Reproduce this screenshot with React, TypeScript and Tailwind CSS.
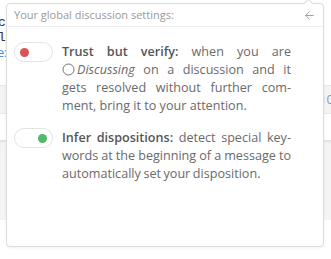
import React from 'react';
import { ArrowLeft } from 'lucide-react';

const font = { fontFamily: '"Open Sans", "Noto Sans", sans-serif' };

function Toggle({ on }: { on: boolean }) {
  return (
    <div className="mt-[-1px] flex h-[20px] w-[39px] shrink-0 items-center rounded-full border border-[#e4e4e4] bg-white px-[5px]">
      <div
        className={
          on
            ? 'ml-auto h-[9px] w-[9px] rounded-full bg-[#52b96a]'
            : 'h-[9px] w-[9px] rounded-full bg-[#d95454]'
        }
      />
    </div>
  );
}

function SettingRow({ on, tight, children }: { on: boolean; tight?: boolean; children: React.ReactNode }) {
  return (
    <div className="flex gap-[9px]">
      <Toggle on={on} />
      <p
        lang="en"
        className={
          tight
            ? 'w-[229px] text-justify text-[12.6px] leading-[18px] text-[#6a6a6a] [hyphens:manual] [word-spacing:-0.7px]'
            : 'w-[229px] text-justify text-[12.6px] leading-[18px] text-[#6a6a6a] [hyphens:manual]'
        }
      >
        {children}
      </p>
    </div>
  );
}

export default function App() {
  return (
    <div className="relative h-[259px] w-[331px] overflow-hidden bg-white" style={font}>
      {/* page behind the popup */}
      <div className="flex flex-col">
        <div className="h-[15px]" />
        <div className="-ml-[2px] font-mono text-[13px] leading-[15px] text-[#333]">cs example</div>
        <div className="-ml-[2px] font-mono text-[13px] leading-[15px] text-[#333]">lu values</div>
        <div className="-ml-[3px] text-[13px] leading-[15px] text-[#3b8ed8]">ex example</div>
        <div className="h-[25px]" />
        <div className="flex h-[29px] items-center justify-end border-y border-[#e8e8e8] bg-[#f3f3f3] text-[13px] text-[#8aa0a8]">
          <span className="-mr-[3px]">10</span>
        </div>
        <div className="h-[26px]" />
        <div className="h-[80px] border-t border-[#e2e2e2] bg-[#f4f4f4] shadow-[inset_0_3px_3px_-2px_rgba(0,0,0,0.08)]" />
      </div>

      {/* popup */}
      <div className="absolute left-[6px] top-[3px] h-[244px] w-[318px] rounded-[4px] border border-[#dcdcdc] bg-white shadow-[0_1px_3px_rgba(0,0,0,0.06)]">
        <div className="absolute -top-[4px] right-[11px] h-[7px] w-[7px] rotate-45 border-l border-t border-[#dcdcdc] bg-white" />
        <div className="relative flex h-[23px] items-center justify-between border-b border-[#eeeeee] px-[7px]">
          <span className="text-[11px] text-[#9a9a9a]">Your global discussion settings:</span>
          <ArrowLeft size={13} strokeWidth={1.75} className="text-[#9a9a9a]" />
        </div>
        <div className="flex flex-col gap-[14px] pl-[7px] pt-[16px]">
          <SettingRow on={false}>
            <b className="font-semibold text-[#555]">Trust but verify:</b> when you are{' '}
            <span className="whitespace-nowrap">
              <svg width="13" height="13" viewBox="0 0 13 13" className="mr-[2px] inline-block align-[-2px]">
                <circle cx="6.5" cy="6.5" r="5.5" fill="none" stroke="#707070" strokeWidth="1" />
              </svg>
              <i>Discussing</i>
            </span>{' '}
            on a discussion and it gets resolved without further com{'\u00AD'}ment, bring it to your attention.
          </SettingRow>
          <SettingRow on={true} tight>
            <b className="font-semibold text-[#555]">Infer dispositions:</b> detect special key{'\u00AD'}words at the
            beginning of a message to automatically set your disposition.
          </SettingRow>
        </div>
      </div>
    </div>
  );
}
